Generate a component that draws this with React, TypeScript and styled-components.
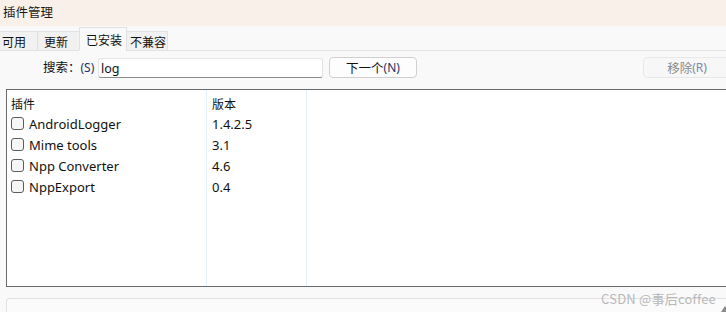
import React from 'react'
import styled, { createGlobalStyle } from 'styled-components'

const GlobalStyle = createGlobalStyle`
  html, body {
    margin: 0;
    padding: 0;
    background: #f9f9f9;
  }
  body {
    width: 726px;
    height: 312px;
    overflow: hidden;
    font-family: "Segoe UI", "Noto Sans", "Noto Sans CJK SC", sans-serif;
    font-size: 13px;
    color: #111;
  }
`

const plugins = [
  { name: 'AndroidLogger', version: '1.4.2.5' },
  { name: 'Mime tools', version: '3.1' },
  { name: 'Npp Converter', version: '4.6' },
  { name: 'NppExport', version: '0.4' },
]

export default function App() {
  return (
    <Window>
      <GlobalStyle />
      <TitleBar>插件管理</TitleBar>

      <TabStrip>
        <Tab $w={38}>可用</Tab>
        <Tab $w={43}>更新</Tab>
        <Tab $w={48} $active>
          已安装
        </Tab>
        <Tab $w={42}>不兼容</Tab>
      </TabStrip>

      <SearchRow>
        <Label>
          搜索：<Mnemonic>(S)</Mnemonic>
        </Label>
        <SearchInput defaultValue="log" />
        <Button>
          下一个<Mnemonic>(N)</Mnemonic>
        </Button>
        <Spacer />
        <Button $disabled>
          移除<Mnemonic>(R)</Mnemonic>
        </Button>
      </SearchRow>

      <ListBox>
        <HeaderRow>
          <Cell>插件</Cell>
          <Cell>版本</Cell>
          <Cell />
        </HeaderRow>
        {plugins.map((p) => (
          <Row key={p.name}>
            <Cell>
              <CheckBox />
              {p.name}
            </Cell>
            <Cell>{p.version}</Cell>
            <Cell />
          </Row>
        ))}
        <FillRow>
          <Cell />
          <Cell />
          <Cell />
        </FillRow>
      </ListBox>

      <DetailBox />

      <Watermark>CSDN @事后coffee</Watermark>
      <ScrollArrow />
    </Window>
  )
}

const Window = styled.div`
  position: relative;
  width: 726px;
  height: 312px;
  display: flex;
  flex-direction: column;
  background: #f9f9f9;
  overflow: hidden;
`

const TitleBar = styled.div`
  height: 26px;
  display: flex;
  align-items: center;
  padding: 0 0 4px 3px;
  box-sizing: border-box;
  background: #f8f0e9;
  font-family: "Noto Sans CJK SC", sans-serif;
  font-size: 12.5px;
  color: #1a1a1a;
`

const TabStrip = styled.div`
  height: 25px;
  display: flex;
  align-items: flex-end;
  border-bottom: 1px solid #e3e3e3;
  background: #f9f9f9;
  box-sizing: border-box;
`

const Tab = styled.div<{ $active?: boolean; $w: number }>`
  width: ${(p) => p.$w}px;
  flex: none;
  height: ${(p) => (p.$active ? '24px' : '20px')};
  margin-bottom: -1px;
  margin-right: -1px;
  display: flex;
  align-items: center;
  padding-left: 6px;
  box-sizing: border-box;
  white-space: nowrap;
  background: ${(p) => (p.$active ? '#f9f9f9' : '#f1f1f1')};
  border: 1px solid #e1e1e1;
  border-bottom: 1px solid ${(p) => (p.$active ? '#f9f9f9' : '#e3e3e3')};
  font-family: "Noto Sans CJK SC", sans-serif;
  font-size: 12px;
  &:first-child {
    border-left: none;
    padding-left: 2px;
  }
  &:last-child {
    padding-left: 3px;
  }
`

const SearchRow = styled.div`
  height: 38px;
  display: flex;
  align-items: flex-start;
  padding: 6px 0 0 43px;
  box-sizing: border-box;
`

const Label = styled.span`
  font-family: "Noto Sans CJK SC", sans-serif;
  font-size: 12.5px;
  width: 55px;
  line-height: 20px;
`

const Mnemonic = styled.span`
  font-family: "Segoe UI", "Noto Sans", sans-serif;
  font-size: 12px;
  color: #223366;
`

const SearchInput = styled.input`
  width: 225px;
  height: 20px;
  margin-top: 1px;
  box-sizing: border-box;
  border: 1px solid #e4e4e4;
  border-bottom: 1px solid #8a8a8a;
  border-radius: 3px;
  background: #fff;
  padding: 0 0 0 2px;
  font-family: "Segoe UI", "Noto Sans", sans-serif;
  font-size: 12.5px;
  color: #111;
  outline: none;
`

const Button = styled.div<{ $disabled?: boolean }>`
  width: 88px;
  height: 21px;
  margin-left: ${(p) => (p.$disabled ? '0' : '6px')};
  margin-right: ${(p) => (p.$disabled ? '-5px' : '0')};
  box-sizing: border-box;
  display: flex;
  align-items: center;
  justify-content: center;
  border: 1px solid ${(p) => (p.$disabled ? '#e8e8e8' : '#d0d0d0')};
  border-radius: 4px;
  background: ${(p) => (p.$disabled ? '#f7f7f7' : '#fdfdfd')};
  font-family: "Noto Sans CJK SC", sans-serif;
  font-size: 12.5px;
  color: ${(p) => (p.$disabled ? '#8a8a8a' : '#111')};
  & > span {
    color: ${(p) => (p.$disabled ? '#7a8aa8' : '#223366')};
  }
`

const Spacer = styled.div`
  flex: 1;
`

const ListBox = styled.div`
  margin-left: 6px;
  width: 724px;
  height: 198px;
  box-sizing: border-box;
  border: 1px solid #6a6a6a;
  background: #fff;
  display: flex;
  flex-direction: column;
`

const HeaderRow = styled.div`
  display: grid;
  grid-template-columns: 200px 100px 1fr;
  height: 23px;
  & > div {
    padding-top: 3px;
    font-family: "Noto Sans CJK SC", sans-serif;
    font-size: 12px;
  }
`

const Row = styled.div`
  display: grid;
  grid-template-columns: 200px 100px 1fr;
  height: 21px;
`

const FillRow = styled.div`
  display: grid;
  grid-template-columns: 200px 100px 1fr;
  flex: 1;
`

const Cell = styled.div`
  display: flex;
  align-items: center;
  gap: 5px;
  padding-left: 5px;
  border-right: 1px solid #e6f0fa;
  box-sizing: border-box;
  font-size: 13px;
  color: #111;
  white-space: nowrap;
  &:first-child {
    padding-left: 4px;
  }
  &:last-child {
    border-right: none;
  }
`

const CheckBox = styled.span`
  width: 13px;
  height: 13px;
  box-sizing: border-box;
  border: 1px solid #5c5c5c;
  border-radius: 3px;
  background: #f6f6f6;
  flex: none;
`

const DetailBox = styled.div`
  margin: 11px 0 0 6px;
  flex: 1;
  border: 1px solid #e2e2e2;
  border-right: none;
  border-bottom: none;
  border-top-left-radius: 4px;
  background: #fbfbfb;
`

const Watermark = styled.div`
  position: absolute;
  right: 10px;
  bottom: 4px;
  font-family: "Noto Sans CJK SC", sans-serif;
  font-size: 13px;
  color: #b8b8b8;
  letter-spacing: 0.2px;
`

const ScrollArrow = styled.div`
  position: absolute;
  right: 0;
  bottom: 0;
  width: 0;
  height: 0;
  border-left: 4px solid transparent;
  border-right: 4px solid transparent;
  border-bottom: 6px solid #8a8a8a;
  transform: translateX(3px);
`
